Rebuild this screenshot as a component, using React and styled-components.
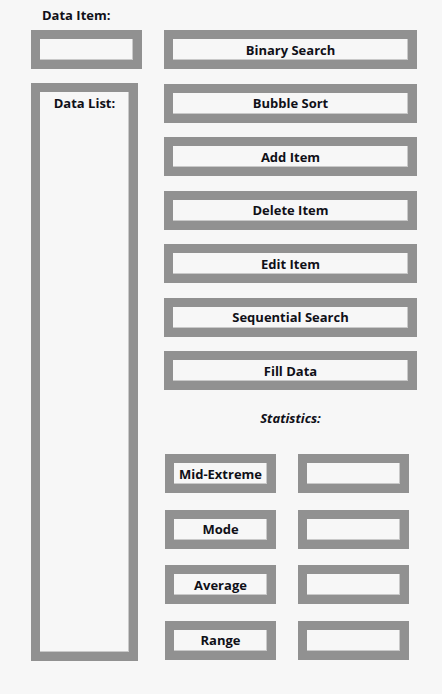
import React from "react";
import styled, { createGlobalStyle } from "styled-components";

const GlobalStyle = createGlobalStyle`
  html, body {
    margin: 0;
    padding: 0;
    background: #f7f7f7;
  }
  body {
    font-family: "Open Sans", "Liberation Sans", sans-serif;
    color: #101018;
  }
`;

const Page = styled.div`
  width: 442px;
  height: 694px;
  box-sizing: border-box;
  padding: 6px 0 0 31px;
  background: #f7f7f7;
`;

const Label = styled.div`
  font-size: 13px;
  font-weight: 700;
  line-height: 18px;
  font-style: ${(p) => (p.italic ? "italic" : "normal")};
  text-align: ${(p) => (p.center ? "center" : "left")};
`;

const TopLabel = styled(Label)`
  margin-left: 11px;
  height: 24px;
`;

const Layout = styled.div`
  display: grid;
  grid-template-columns: 111px 253px;
  column-gap: 22px;
  align-items: start;
`;

const LeftColumn = styled.div`
  display: flex;
  flex-direction: column;
  gap: 14px;
`;

const RightColumn = styled.div`
  display: flex;
  flex-direction: column;
`;

const Frame = styled.div`
  box-sizing: border-box;
  border: 9px solid #919191;
  background: #f7f7f7;
  box-shadow: inset -1px -1px 0 #c9c9c9;
  width: ${(p) => p.width || 111}px;
  height: ${(p) => p.height || 39}px;
  display: flex;
  align-items: center;
  justify-content: center;
  font-size: 13px;
  font-weight: 700;
`;

const ListFrame = styled(Frame)`
  align-items: flex-start;
  padding-top: 2px;
`;

const ButtonStack = styled.div`
  display: flex;
  flex-direction: column;
  gap: 14.5px;
`;

const StatsTitle = styled(Label)`
  margin-top: 19px;
  margin-bottom: 27px;
`;

const StatsGrid = styled.div`
  display: grid;
  grid-template-columns: 111px 111px;
  column-gap: 22px;
  row-gap: 16.5px;
  margin-left: 1px;
`;

const actions = [
  "Binary Search",
  "Bubble Sort",
  "Add Item",
  "Delete Item",
  "Edit Item",
  "Sequential Search",
  "Fill Data",
];

const stats = ["Mid-Extreme", "Mode", "Average", "Range"];

export default function App() {
  return (
    <Page>
      <GlobalStyle />
      <TopLabel>Data Item:</TopLabel>
      <Layout>
        <LeftColumn>
          <Frame />
          <ListFrame width={107} height={578}>
            Data List:
          </ListFrame>
        </LeftColumn>
        <RightColumn>
          <ButtonStack>
            {actions.map((name) => (
              <Frame key={name} width={253}>
                {name}
              </Frame>
            ))}
          </ButtonStack>
          <StatsTitle italic center>
            Statistics:
          </StatsTitle>
          <StatsGrid>
            {stats.map((name) => (
              <React.Fragment key={name}>
                <Frame>{name}</Frame>
                <Frame />
              </React.Fragment>
            ))}
          </StatsGrid>
        </RightColumn>
      </Layout>
    </Page>
  );
}
